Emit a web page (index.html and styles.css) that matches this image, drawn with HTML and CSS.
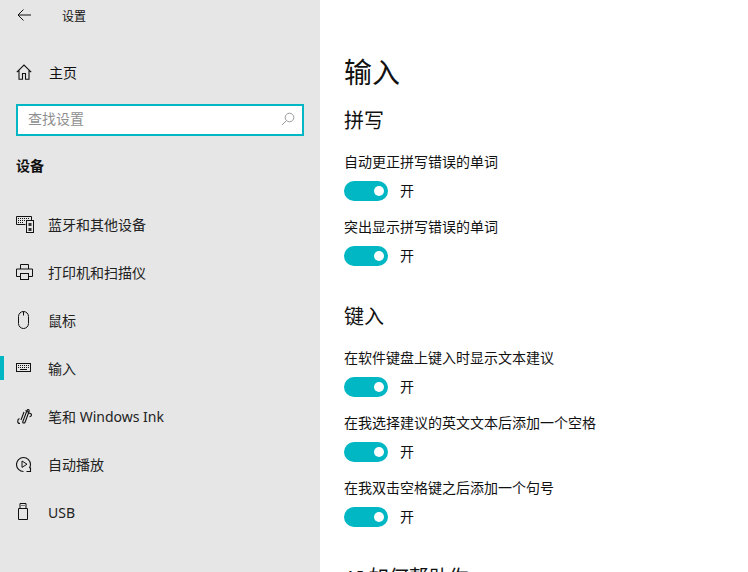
FILE: index.html
```html
<!DOCTYPE html>
<html lang="zh-CN">
<head>
<meta charset="utf-8">
<title>设置</title>
<link rel="stylesheet" href="styles.css">
</head>
<body>
<div class="page">
  <aside class="sidebar">
    <header class="titlebar">
      <svg class="back" width="16" height="16" viewBox="0 0 16 16"><path d="M15 8H2M7.500 2.500 2 8l5.500 5.500" fill="none" stroke="#111" stroke-width="1"/></svg>
      <span class="apptitle">设置</span>
    </header>
    <a class="home">
      <svg class="icon" width="16" height="16" viewBox="0 0 16 16"><path d="M.8 8.200 8 1l7.200 7.200M3 6.500v8.800h3.500V9.500h3v5.800H13V6.500" fill="none" stroke="#111" stroke-width="1.100"/></svg>
      <span>主页</span>
    </a>
    <div class="search">
      <span class="placeholder">查找设置</span>
      <svg class="glass" width="14" height="14" viewBox="0 0 14 14"><circle cx="8.500" cy="5.500" r="4.300" fill="none" stroke="#9a9a9a"/><path d="M5.500 8.500 1 13" stroke="#9a9a9a" fill="none"/></svg>
    </div>
    <div class="group">设备</div>
    <nav class="nav">
      <a class="item">
        <svg class="icon" width="18" height="18" viewBox="0 0 18 18"><path d="M.5 1.500h15v4M.5 1.500v8h9" fill="none" stroke="#111"/><path d="M2 3.500h11M2 5.500h7M2 7.500h6" stroke="#111" stroke-dasharray="1 1" fill="none"/><rect x="10.500" y="5.500" width="7" height="12" fill="#e6e6e6" stroke="#111"/><path d="M12.500 8h3v3h-3zM12.500 13h3v3h-3z" fill="#333"/></svg>
        <span>蓝牙和其他设备</span>
      </a>
      <a class="item">
        <svg class="icon" width="17" height="17" viewBox="0 0 17 17"><path d="M4.500 5V.5h8V5M4 12.500H.5V5h16v7.500H13" fill="none" stroke="#111"/><rect x="4.500" y="9.500" width="8" height="6" fill="none" stroke="#111"/></svg>
        <span>打印机和扫描仪</span>
      </a>
      <a class="item">
        <svg class="icon" width="18" height="18" viewBox="0 0 18 18"><path d="M2.500 5.500a5 5 0 0 1 10 0v7a5 5 0 0 1-10 0z" fill="none" stroke="#111"/><path d="M7.500 .5v4" stroke="#111" fill="none"/></svg>
        <span>鼠标</span>
      </a>
      <a class="item current">
        <svg class="icon" width="16" height="16" viewBox="0 0 16 16"><rect x=".5" y="3.500" width="14" height="8" fill="none" stroke="#111"/><path d="M2 5.500h11M2 7.500h11" stroke="#111" stroke-dasharray="1 1" fill="none"/><path d="M4 9.500h7" stroke="#111" fill="none"/></svg>
        <span>输入</span>
      </a>
      <a class="item">
        <svg class="icon" width="17" height="17" viewBox="0 0 17 17"><path d="M4 15.500c-3 0-3-4-.5-5M6.500 14.500 11 2.500c.5-1.500 2.500-1 2.200.5L9 14.500M9.500 2.500l3.500 2M6.500 14.500c1 .7 2 .5 2.500 0M12.500 5c2 .2 3 1 3 2s-1 1.500-2 1.700M8 4 5 12" fill="none" stroke="#111" stroke-width="1.100"/></svg>
        <span>笔和 Windows Ink</span>
      </a>
      <a class="item">
        <svg class="icon" width="17" height="17" viewBox="0 0 17 17"><path d="M7.500 15.500a7 7 0 1 1 7-7c0 1.500-.4 2.700-1.200 3.800" fill="none" stroke="#111" stroke-width="1.100"/><path d="M6 5l5 3.200-5 3.200z" fill="none" stroke="#111"/><path d="M14.500 11.500v4h-4" fill="none" stroke="#111" stroke-width="1.100"/></svg>
        <span>自动播放</span>
      </a>
      <a class="item">
        <svg class="icon" width="16" height="18" viewBox="0 0 16 18"><path d="M2.500 5.500h9v11h-9zM4 5.500V.5h6v5" fill="none" stroke="#111"/><path d="M5.500 2.500h1M7.500 2.500h1" stroke="#111" fill="none"/></svg>
        <span>USB</span>
      </a>
    </nav>
  </aside>
  <main class="content">
    <h1>输入</h1>
    <section class="section">
      <h2>拼写</h2>
      <div class="setting">
        <p>自动更正拼写错误的单词</p>
        <div class="state"><span class="toggle"><span class="knob"></span></span><span>开</span></div>
      </div>
      <div class="setting">
        <p>突出显示拼写错误的单词</p>
        <div class="state"><span class="toggle"><span class="knob"></span></span><span>开</span></div>
      </div>
    </section>
    <section class="section">
      <h2>键入</h2>
      <div class="setting">
        <p>在软件键盘上键入时显示文本建议</p>
        <div class="state"><span class="toggle"><span class="knob"></span></span><span>开</span></div>
      </div>
      <div class="setting">
        <p>在我选择建议的英文文本后添加一个空格</p>
        <div class="state"><span class="toggle"><span class="knob"></span></span><span>开</span></div>
      </div>
      <div class="setting">
        <p>在我双击空格键之后添加一个句号</p>
        <div class="state"><span class="toggle"><span class="knob"></span></span><span>开</span></div>
      </div>
    </section>
    <section class="section">
      <h2>AI 如何帮助你</h2>
    </section>
  </main>
</div>
</body>
</html>
```
FILE: styles.css
```css
* { box-sizing: border-box; }
html, body { margin: 0; height: 100%; overflow: hidden; }
body {
  font-family: "Noto Sans", "Noto Sans CJK SC", sans-serif;
  font-size: 14px;
  color: #111;
  background: #fff;
}
.page {
  display: grid;
  grid-template-columns: 320px 1fr;
  height: 572px;
  overflow: hidden;
}
.sidebar {
  background: #e6e6e6;
  display: flex;
  flex-direction: column;
  padding: 0 16px;
  height: 572px;
}
.titlebar {
  display: flex;
  align-items: center;
  height: 32px;
}
.back {
  flex: none;
  margin-bottom: 2px;
}
.apptitle {
  font-size: 12px;
  margin-left: 30px;
}
.home {
  display: flex;
  align-items: center;
  gap: 17px;
  height: 48px;
  margin-top: 16px;
}
.icon { flex: none; }
.search {
  display: flex;
  align-items: center;
  justify-content: space-between;
  height: 32px;
  margin-top: 8px;
  padding: 0 7px 0 10px;
  background: #fff;
  border: 2px solid #00b7c3;
}
.placeholder {
  color: #8f8f8f;
  margin-bottom: 4px;
}
.glass { margin-bottom: 2px; }
.group {
  font-weight: 700;
  line-height: 20px;
  margin-top: 20px;
}
.nav {
  display: flex;
  flex-direction: column;
  margin: 24px -16px 0;
}
.item {
  position: relative;
  display: grid;
  grid-template-columns: 32px 1fr;
  align-items: center;
  height: 48px;
  padding-left: 16px;
  color: #222;
}
.current::before {
  content: "";
  position: absolute;
  left: 0;
  top: 12px;
  width: 4px;
  height: 24px;
  background: #00b7c3;
}
.content {
  padding: 52px 24px 0;
  min-width: 0;
}
h1 {
  margin: 0;
  font-size: 28px;
  font-weight: 400;
  line-height: 40px;
}
h2 {
  margin: 0;
  font-size: 20px;
  font-weight: 400;
  line-height: 28px;
}
.section { margin-top: 15px; }
.section + .section { margin-top: 37px; }
.setting { margin-top: 16px; }
.section h2 + .setting { margin-top: 17px; }
.setting p {
  margin: 0;
  line-height: 20px;
}
.state {
  display: flex;
  align-items: center;
  gap: 12px;
  height: 20px;
  margin-top: 9px;
  line-height: 20px;
}
.toggle {
  display: flex;
  align-items: center;
  justify-content: flex-end;
  width: 44px;
  height: 20px;
  padding-right: 4px;
  border-radius: 10px;
  background: #00b7c3;
}
.knob {
  width: 10px;
  height: 10px;
  border-radius: 50%;
  background: #fff;
}
```
